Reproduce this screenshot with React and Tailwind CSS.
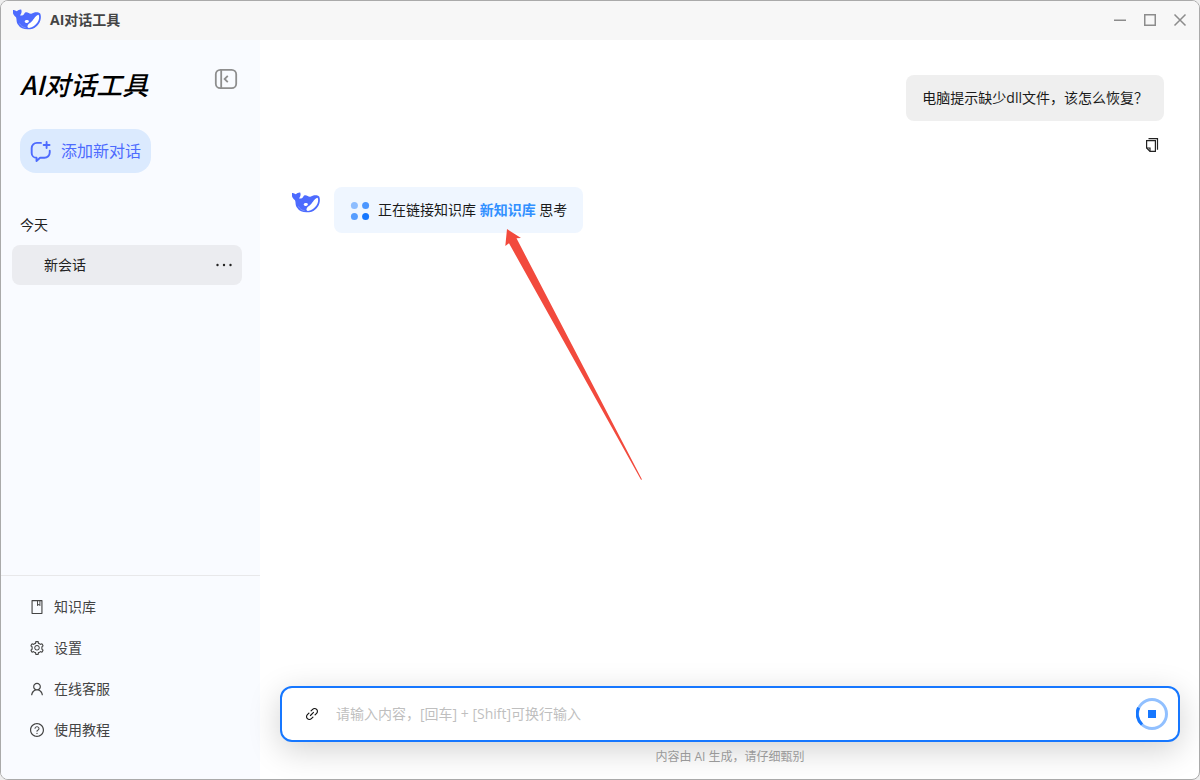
import { useState } from 'react';
import {
  AiOutlineBook,
  AiOutlineLink,
  AiOutlineQuestionCircle,
  AiOutlineSetting,
  AiOutlineUser,
} from 'react-icons/ai';

const menuItems = [
  { label: '知识库', icon: AiOutlineBook },
  { label: '设置', icon: AiOutlineSetting },
  { label: '在线客服', icon: AiOutlineUser },
  { label: '使用教程', icon: AiOutlineQuestionCircle },
];

const WhaleLogo = () => (
  <svg className="w-7 h-[21px] shrink-0" viewBox="0 0 84 63" aria-hidden="true">
    <path
      fill="#4d6bfe"
      d="M0 3c5-1 8 3 12 4 3-3 8-6 13-5 2 7 0 12-4 17 5 2 9 0 12-3 2-3 2-7 7-6 6 0 9 5 15 4 8-5 20-7 27 0 6 17-5 39-23 45-18 5-36 1-43-11-7-8-4-16-7-23C0 18-2 10 0 3z"
    />
    <path fill="#fff" d="M77 17c6 14-6 35-29 40-7-2-6-10 4-16 10-6 12-21 25-24z" />
    <path fill="#fff" d="M35 38c0-4 4-6 8-5 4 0 6 3 4 6-3 4-8 5-12-1z" />
    <path d="M19 43c4 7 10 12 19 13" fill="none" stroke="#8198ff" strokeWidth="2.5" />
  </svg>
);

const TitleBar = () => (
  <header className="flex h-[39px] items-center justify-between bg-[#f7f7f7] pl-3 pr-3 pb-0.5">
    <div className="flex items-center gap-[9px]">
      <WhaleLogo />
      <span className="text-sm font-bold text-[#444]">AI对话工具</span>
    </div>
    <div className="flex items-center gap-4 text-[#8c8c8c]">
      <button type="button" aria-label="最小化">
        <svg className="size-3.5" viewBox="0 0 14 14" fill="none" stroke="currentColor" strokeWidth="1.5">
          <path d="M1 7.3h12" />
        </svg>
      </button>
      <button type="button" aria-label="最大化">
        <svg className="size-3.5" viewBox="0 0 14 14" fill="none" stroke="currentColor" strokeWidth="1.5">
          <rect x="1.75" y="1.75" width="10.5" height="10.5" />
        </svg>
      </button>
      <button type="button" aria-label="关闭">
        <svg className="size-3.5" viewBox="0 0 14 14" fill="none" stroke="currentColor" strokeWidth="1.5">
          <path d="M1.5 1.5l11 11M12.5 1.5l-11 11" />
        </svg>
      </button>
    </div>
  </header>
);

const Sidebar = () => (
  <aside className="flex w-[259px] shrink-0 flex-col bg-[#f9fbff]">
    <div className="flex items-start justify-between pl-[19px] pr-[22px] pt-7">
      <h1 className="font-['Noto_Sans_CJK_SC',sans-serif] text-[26px] leading-8 font-medium italic text-black">
        AI对话工具
      </h1>
      <button type="button" aria-label="收起侧边栏" className="text-[#8e8e8e]">
        <svg className="h-[22px] w-6" viewBox="0 0 24 22" fill="none" stroke="currentColor" strokeWidth="1.8">
          <rect x="1.8" y="1.8" width="20.4" height="18.4" rx="4.5" />
          <path d="M7.2 2v18M13.8 7.8L10.6 11l3.2 3.2" />
        </svg>
      </button>
    </div>

    <div className="px-[19px] pt-[29px]">
      <button
        type="button"
        className="flex h-11 items-center gap-2.5 rounded-2xl bg-[#dbeafe] px-2.5 text-base text-[#4d6bfe]"
      >
        <svg className="size-[21px]" viewBox="0 0 20 20" fill="none" stroke="currentColor" strokeWidth="1.8" strokeLinecap="round" strokeLinejoin="round">
          <path d="M10.5 1.8H6.6A5 5 0 0 0 1.6 6.8v4.6a4.6 4.6 0 0 0 4.6 4.6v3l3.4-3h4.2a5 5 0 0 0 5-5V9.3" />
          <path d="M15.8 1v5.6M13 3.8h5.6" />
        </svg>
        添加新对话
      </button>
    </div>

    <section className="pl-[11px] pr-[18px] pt-[42px] text-sm text-[#222]">
      <h2 className="pl-2 leading-5">今天</h2>
      <div className="mt-2.5 flex h-10 items-center justify-between rounded-lg bg-[#ebecf0] pl-8 pr-2.5">
        <a href="#chat">新会话</a>
        <button type="button" aria-label="更多">
          <svg className="h-4 w-4" viewBox="0 0 16 16" fill="currentColor">
            <circle cx="1.5" cy="8" r="1.2" />
            <circle cx="8" cy="8" r="1.2" />
            <circle cx="14.5" cy="8" r="1.2" />
          </svg>
        </button>
      </div>
    </section>

    <nav className="mt-auto border-t border-[#e8e8ea] pt-2.5 pb-[29px]">
      {menuItems.map(({ label, icon: Icon }) => (
        <a key={label} href="#menu" className="flex h-[41px] items-center gap-[9px] pl-7 text-sm text-[#444]">
          <Icon className="size-4" />
          {label}
        </a>
      ))}
    </nav>
  </aside>
);

const UserMessage = () => (
  <div className="flex flex-col items-end">
    <p className="rounded-lg bg-[#efefef] px-4 py-3 text-sm leading-[22px] text-[#1a1a1a]">
      电脑提示缺少dll文件，该怎么恢复？
    </p>
    <button type="button" aria-label="复制" className="mt-4 mr-1 text-[#222]">
      <svg className="size-4" viewBox="0 0 16 16" fill="none" stroke="currentColor" strokeWidth="1.2">
        <path d="M4.5 1.6h9v11.2" />
        <path d="M2.6 3.6h8.8v10.8H6L2.6 11z" />
        <path d="M2.8 11H6v3.2" />
      </svg>
    </button>
  </div>
);

const AssistantMessage = () => (
  <div className="mt-[34px] flex items-start gap-3.5">
    <div className="pt-[5px]">
      <WhaleLogo />
    </div>
    <div className="relative flex items-center gap-2 rounded-lg bg-[#eff6ff] px-4 py-3 text-sm leading-[22px] text-[#1a1a1a]">
      <svg className="size-5" viewBox="0 0 20 20" fill="#1677ff" aria-hidden="true">
        <circle cx="4.4" cy="5.6" r="3.5" opacity="0.45" />
        <circle cx="15.6" cy="5.6" r="3.5" opacity="0.75" />
        <circle cx="4.4" cy="16.4" r="3.5" opacity="0.7" />
        <circle cx="15.6" cy="16.4" r="3.5" />
      </svg>
      <p>
        正在链接知识库 <b className="text-[#3190ff]">新知识库</b> 思考
      </p>
      {/* pointer to the linked knowledge base */}
      <svg className="absolute left-[171px] top-[42px] h-[252px] w-[138px]" viewBox="0 0 138 252" aria-hidden="true">
        <path fill="#f24a3d" d="M2 0l14 9-4.5 0.3L137 250.5l-1 0.3L4 14.3.3 17z" />
      </svg>
    </div>
  </div>
);

const Composer = () => {
  const [text, setText] = useState('');

  return (
    <form
      className="flex h-14 items-center rounded-xl border-2 border-[#1677ff] bg-white pl-[22px] pr-2.5 shadow-[0_8px_32px_rgba(0,0,0,0.18)]"
      onSubmit={(e) => e.preventDefault()}
    >
      <button type="button" aria-label="添加链接" className="text-[#111]">
        <AiOutlineLink className="size-4" />
      </button>
      <input
        type="text"
        aria-label="输入内容"
        value={text}
        onChange={(e) => setText(e.target.value)}
        placeholder="请输入内容，[回车] + [Shift]可换行输入"
        className="ml-4 min-w-0 flex-1 bg-transparent text-sm text-[#222] outline-none placeholder:text-[#bfbfbf]"
      />
      <button type="button" aria-label="停止">
        <svg className="size-8" viewBox="0 0 32 32" fill="none" strokeWidth="3">
          <circle cx="16" cy="16" r="14.5" stroke="#91c0ff" />
          <path d="M2.6 9.6A14.5 14.5 0 0 0 6 26.5" stroke="#1677ff" />
          <rect x="12" y="12" width="8" height="8" fill="#1677ff" />
        </svg>
      </button>
    </form>
  );
};

export default function App() {
  return (
    <div className="min-h-screen bg-[#eee] font-['Open_Sans','Noto_Sans_CJK_SC',sans-serif]">
      <div className="flex min-h-screen flex-col overflow-hidden rounded-lg border border-[#aaa] bg-white">
        <TitleBar />
        <div className="flex flex-1">
          <Sidebar />
          <main className="flex min-w-0 flex-1 flex-col">
            <div className="flex-1 pl-8 pr-[35px] pt-[35px]">
              <UserMessage />
              <AssistantMessage />
            </div>
            <div className="pl-5 pr-[19px] pb-[13px]">
              <Composer />
              <p className="relative mt-1.5 text-center text-xs leading-[18px] text-[#999]">
                内容由 AI 生成，请仔细甄别
              </p>
            </div>
          </main>
        </div>
      </div>
    </div>
  );
}
